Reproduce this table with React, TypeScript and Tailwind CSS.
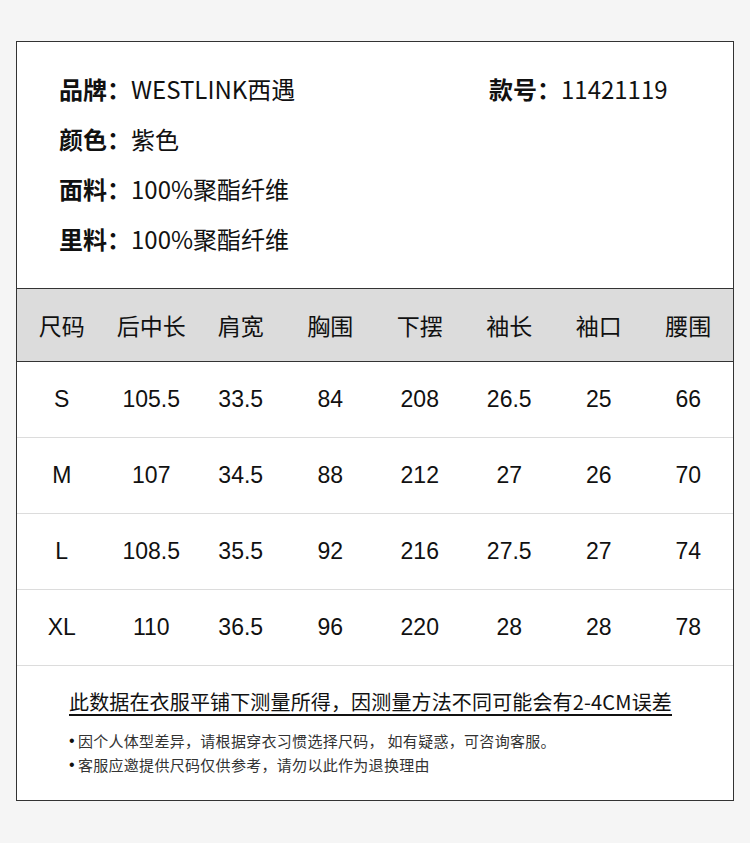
import React from "react";

const cjk = '"Noto Sans CJK SC", "Noto Sans", sans-serif';
const num = '"Liberation Sans", "Noto Sans CJK SC", sans-serif';

const headers = ["尺码", "后中长", "肩宽", "胸围", "下摆", "袖长", "袖口", "腰围"];
const rows = [
  ["S", "105.5", "33.5", "84", "208", "26.5", "25", "66"],
  ["M", "107", "34.5", "88", "212", "27", "26", "70"],
  ["L", "108.5", "35.5", "92", "216", "27.5", "27", "74"],
  ["XL", "110", "36.5", "96", "220", "28", "28", "78"],
];

function Bullet({ children }: { children: React.ReactNode }) {
  return (
    <div className="flex items-center">
      <span className="text-[16px] mr-[3px] text-[#111]" style={{ fontFamily: num }}>•</span>
      <span>{children}</span>
    </div>
  );
}

export default function App() {
  return (
    <div className="w-[750px] h-[843px] bg-[#f5f5f5] pt-[41px] pl-[16px]" style={{ fontFamily: cjk }}>
      <div className="w-[718px] h-[760px] border border-[#333] bg-white flex flex-col">
        {/* info */}
        <div className="h-[246px] pt-[22px] pl-[42px] text-[24px] leading-[50px] text-[#111]">
          <div className="flex">
            <div className="w-[430px]"><span className="font-bold">品牌：</span>WESTLINK西遇</div>
            <div><span className="font-bold">款号：</span>11421119</div>
          </div>
          <div><span className="font-bold">颜色：</span>紫色</div>
          <div><span className="font-bold">面料：</span>100%聚酯纤维</div>
          <div><span className="font-bold">里料：</span>100%聚酯纤维</div>
        </div>
        {/* header */}
        <div className="h-[74px] bg-[#dcdcdc] border-y border-[#333] grid grid-cols-8 items-center text-[23px] text-[#111]">
          {headers.map((h) => (
            <div key={h} className="text-center">{h}</div>
          ))}
        </div>
        {rows.map((r, i) => (
          <div key={i} className="h-[76px] border-b border-[#dcdcdc] grid grid-cols-8 items-center text-[23px] text-[#111]" style={{ fontFamily: num }}>
            {r.map((c, j) => (
              <div key={j} className="text-center">{c}</div>
            ))}
          </div>
        ))}
        {/* footer */}
        <div className="pl-[52px] pt-[23px]">
          <div className="inline-block text-[20px] leading-[25px] text-[#111] tracking-[0.15px] border-b-2 border-[#111]">
            此数据在衣服平铺下测量所得，因测量方法不同可能会有2-4CM误差
          </div>
          <div className="mt-[13px] text-[15px] leading-[24px] text-[#333] tracking-[0.3px]">
            <Bullet>因个人体型差异，请根据穿衣习惯选择尺码， 如有疑惑，可咨询客服。</Bullet>
            <Bullet>客服应邀提供尺码仅供参考，请勿以此作为退换理由</Bullet>
          </div>
        </div>
      </div>
    </div>
  );
}
